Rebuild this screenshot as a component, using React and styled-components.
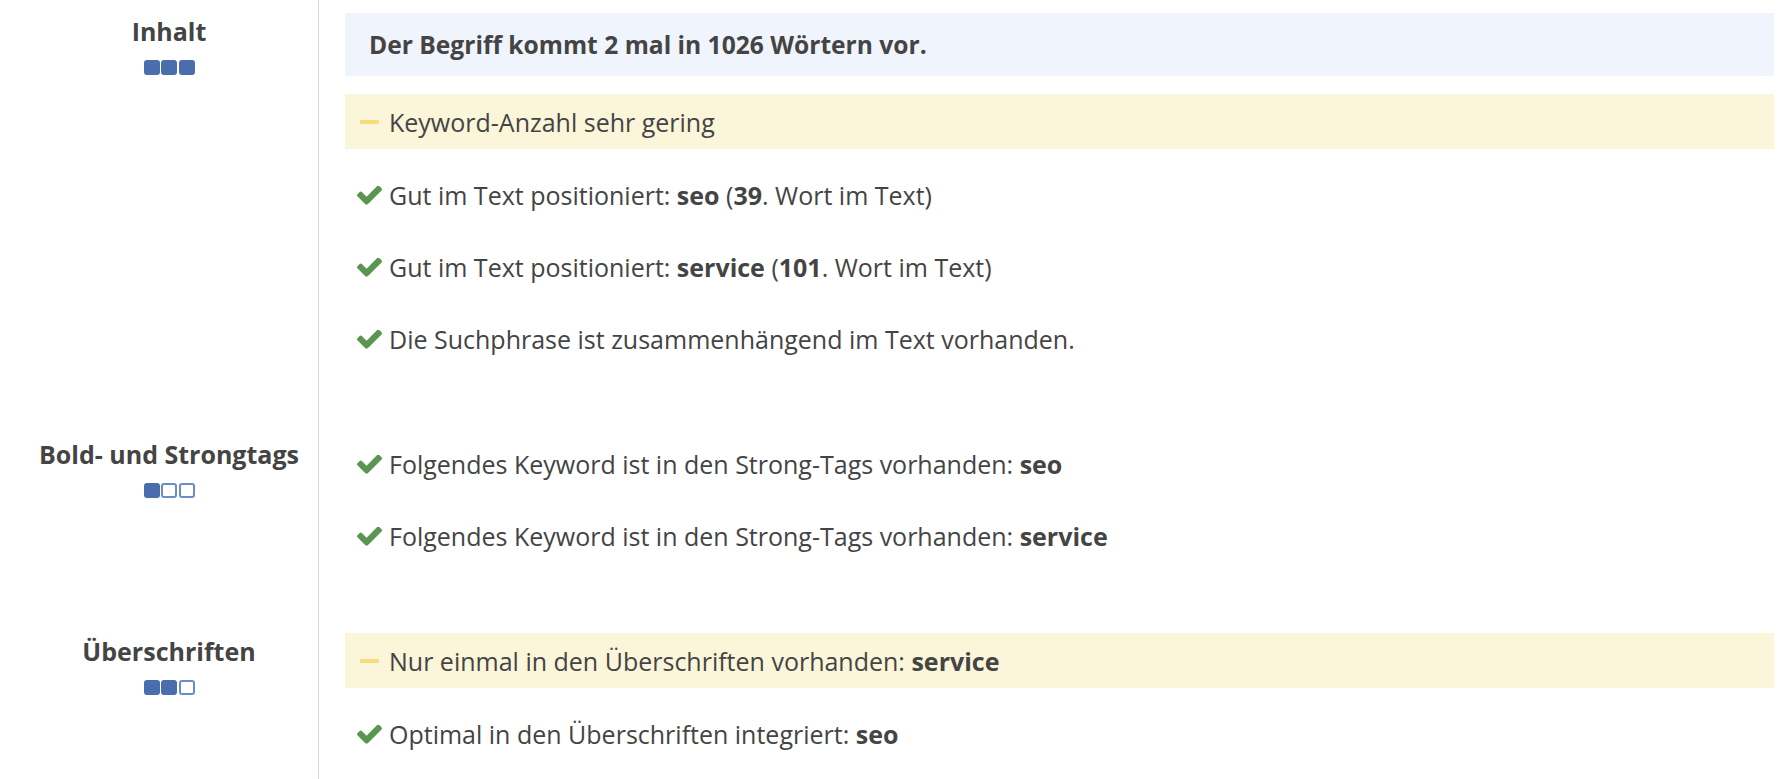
import React from "react";
import styled, { createGlobalStyle } from "styled-components";

const Global = createGlobalStyle`
  html, body { margin: 0; padding: 0; background: #fff; overflow: hidden; }
  body { font-family: "Open Sans", "Noto Sans", Arial, sans-serif; color: #444; }
`;

const Page = styled.div`
  width: 1781px;
  min-height: 779px;
  display: flex;
  flex-direction: column;
`;

const Section = styled.section`
  display: grid;
  grid-template-columns: 319px 1fr;
`;

const LeftCell = styled.div`
  border-right: 1px solid #d9d9d9;
  padding: 15px 0 0 20px;
  display: flex;
  flex-direction: column;
  align-items: center;
`;

const Label = styled.div`
  font-size: 25px;
  line-height: 32px;
  font-weight: 700;
  color: #444;
  white-space: nowrap;
`;

const Dots = styled.div`
  display: flex;
  gap: 1.5px;
  margin-top: 13px;
`;

const Dot = styled.span`
  width: 16px;
  height: 15px;
  box-sizing: border-box;
  border-radius: 3px;
  background: ${(p) => (p.$on ? "#4a6dad" : "#fff")};
  border: 2px solid ${(p) => (p.$on ? "#4a6dad" : "#6a8dc8")};
`;

const RightCell = styled.div`
  padding: 5px 7px 48px 26px;
  display: flex;
  flex-direction: column;
  ${Section}:last-child & { padding-bottom: 9px; }
`;

const Box = styled.div`
  margin: 8px 0 10px;
  display: flex;
  align-items: center;
  font-size: 25px;
  color: #444;
  white-space: nowrap;
`;

const InfoBox = styled(Box)`
  height: 63px;
  padding-left: 24px;
  background: #f0f4fd;
  font-weight: 700;
  font-size: 24.6px;
`;

const WarnBox = styled(Box)`
  height: 55px;
  padding-left: 15px;
  background: #fbf5d9;
`;

const Dash = styled.span`
  width: 19px;
  height: 4px;
  border-radius: 1px;
  background: #f4de7c;
  margin-right: 10px;
  flex: none;
`;

const CheckRow = styled.div`
  height: 72px;
  display: flex;
  align-items: center;
  padding-left: 12px;
  font-size: 25px;
  color: #444;
  white-space: nowrap;
`;

const CheckSvg = styled.svg`
  width: 25px;
  height: 19px;
  margin-right: 7px;
  flex: none;
  fill: #5a9552;
`;

const B = styled.b`
  font-weight: 700;
`;

const Check = () => (
  <CheckSvg viewBox="121 362 1550 1164">
    <path d="M1671 566q0 40-28 68l-724 724-136 136q-28 28-68 28t-68-28l-136-136-362-362q-28-28-28-68t28-68l136-136q28-28 68-28t68 28l294 295 656-657q28-28 68-28t68 28l136 136q28 28 28 68z" />
  </CheckSvg>
);

const Rating = ({ value }) => (
  <Dots>
    {[0, 1, 2].map((i) => (
      <Dot key={i} $on={i < value} />
    ))}
  </Dots>
);

export default function App() {
  return (
    <>
      <Global />
      <Page>
        <Section>
          <LeftCell>
            <Label>Inhalt</Label>
            <Rating value={3} />
          </LeftCell>
          <RightCell>
            <InfoBox>Der Begriff kommt 2 mal in 1026 Wörtern vor.</InfoBox>
            <WarnBox>
              <Dash />
              Keyword-Anzahl sehr gering
            </WarnBox>
            <CheckRow>
              <Check />
              <span>
                Gut im Text positioniert: <B>seo</B> (<B>39</B>. Wort im Text)
              </span>
            </CheckRow>
            <CheckRow>
              <Check />
              <span>
                Gut im Text positioniert: <B>service</B> (<B>101</B>. Wort im Text)
              </span>
            </CheckRow>
            <CheckRow>
              <Check />
              <span>Die Suchphrase ist zusammenhängend im Text vorhanden.</span>
            </CheckRow>
          </RightCell>
        </Section>
        <Section>
          <LeftCell>
            <Label>Bold- und Strongtags</Label>
            <Rating value={1} />
          </LeftCell>
          <RightCell>
            <CheckRow>
              <Check />
              <span>
                Folgendes Keyword ist in den Strong-Tags vorhanden: <B>seo</B>
              </span>
            </CheckRow>
            <CheckRow>
              <Check />
              <span>
                Folgendes Keyword ist in den Strong-Tags vorhanden: <B>service</B>
              </span>
            </CheckRow>
          </RightCell>
        </Section>
        <Section>
          <LeftCell>
            <Label>Überschriften</Label>
            <Rating value={2} />
          </LeftCell>
          <RightCell>
            <WarnBox>
              <Dash />
              <span>
                Nur einmal in den Überschriften vorhanden: <B>service</B>
              </span>
            </WarnBox>
            <CheckRow>
              <Check />
              <span>
                Optimal in den Überschriften integriert: <B>seo</B>
              </span>
            </CheckRow>
          </RightCell>
        </Section>
      </Page>
    </>
  );
}
